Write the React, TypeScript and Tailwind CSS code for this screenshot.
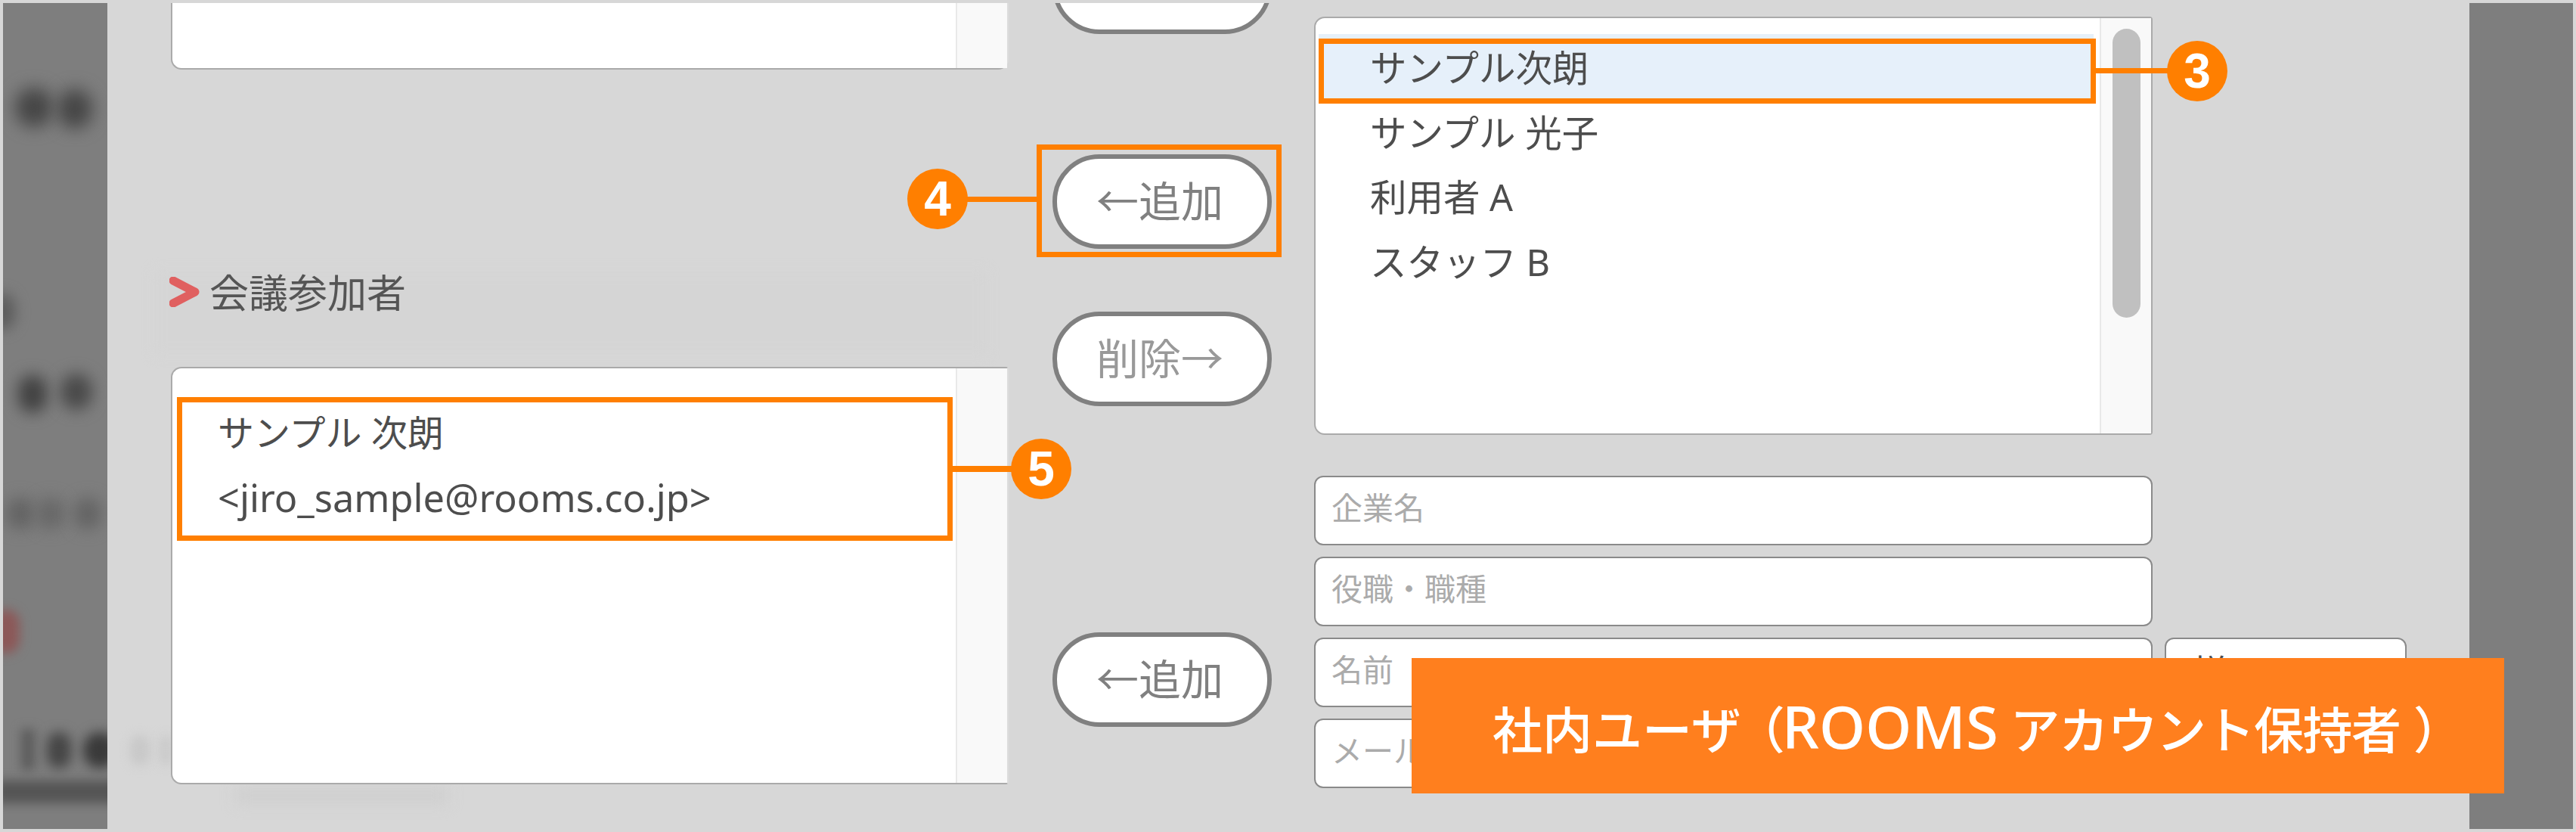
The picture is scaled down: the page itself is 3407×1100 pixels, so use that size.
import React from "react";

const users = ["サンプル 光子", "利用者 A", "スタッフ B"];

function ScrollTrack({ thumb = false }: { thumb?: boolean }) {
  return (
    <div className="w-[68px] shrink-0 self-stretch border-l-2 border-[#e9e9e9] bg-[#f9f9f9] flex justify-center">
      {thumb && <div className="mt-[14px] h-[382px] w-[37px] rounded-full bg-[#c0c0c0]" />}
    </div>
  );
}

function PillButton({ label, className }: { label: string; className: string }) {
  return (
    <button
      className={`h-[125px] w-[290px] shrink-0 rounded-[62px] border-[6px] border-[#808080] bg-white text-[56px] leading-none pr-[6px] pb-[4px] ${className}`}
    >
      {label}
    </button>
  );
}

function Field({ label }: { label: string }) {
  return (
    <div className="flex h-[92px] w-[1109px] shrink-0 items-center rounded-[12px] border-2 border-[#8a8a8a] bg-white pl-[21px] pb-[7px] text-[41px] text-[#ababab]">
      {label}
    </div>
  );
}

function Marker({ n, className }: { n: number; className: string }) {
  return (
    <div
      className={`absolute flex h-[80px] w-[80px] items-center justify-center rounded-full bg-[#ff7f00] font-['Liberation_Sans',sans-serif] text-[64px] font-bold leading-none text-white ${className}`}
    >
      {n}
    </div>
  );
}

export default function App() {
  return (
    <div className="relative flex h-[1100px] w-[3407px] overflow-hidden bg-[#d7d7d7] p-[4px] font-['Noto_Sans','Noto_Sans_CJK_JP',sans-serif] text-[#4d4d4d]">
      {/* blurred page behind the modal, left */}
      <aside className="relative w-[138px] shrink-0 overflow-hidden bg-[#7e7e7e]">
        <div className="absolute left-[16px] top-[112px] h-[52px] w-[50px] rounded-full bg-[#464646] blur-[11px]" />
        <div className="absolute left-[72px] top-[114px] h-[52px] w-[46px] rounded-full bg-[#464646] blur-[11px]" />
        <div className="absolute left-[-20px] top-[384px] h-[48px] w-[36px] rounded-full bg-[#5c5c5c] blur-[9px]" />
        <div className="absolute left-[20px] top-[492px] h-[50px] w-[38px] rounded-full bg-[#424242] blur-[10px]" />
        <div className="absolute left-[76px] top-[490px] h-[48px] w-[42px] rounded-full bg-[#4a4a4a] blur-[10px]" />
        <div className="absolute left-[4px] top-[654px] h-[42px] w-[38px] rounded-full bg-[#646464] blur-[10px]" />
        <div className="absolute left-[44px] top-[654px] h-[42px] w-[38px] rounded-full bg-[#686868] blur-[10px]" />
        <div className="absolute left-[94px] top-[654px] h-[42px] w-[36px] rounded-full bg-[#646464] blur-[10px]" />
        <div className="absolute left-[-14px] top-[802px] h-[58px] w-[36px] rounded-full bg-[#8c5858] blur-[7px]" />
        <div className="absolute left-[24px] top-[960px] h-[54px] w-[18px] bg-[#5c5c5c] blur-[7px]" />
        <div className="absolute left-[58px] top-[964px] h-[48px] w-[32px] rounded-full bg-[#464646] blur-[8px]" />
        <div className="absolute left-[106px] top-[964px] h-[48px] w-[44px] rounded-full bg-[#3a3a3a] blur-[8px]" />
        <div className="absolute left-[-10px] top-[1028px] h-[30px] w-[170px] bg-[#555555] blur-[7px]" />
      </aside>

      <main className="relative flex w-[3124px] shrink-0 overflow-hidden pl-[84px]">
        <div className="absolute left-[30px] top-[968px] h-[40px] w-[26px] rounded-full bg-[#c8c8c8] blur-[7px]" />
        <div className="absolute left-[70px] top-[968px] h-[40px] w-[14px] rounded-full bg-[#c8c8c8] blur-[7px]" />
        <div className="absolute left-[170px] top-[1036px] h-[24px] w-[280px] bg-[#d0d0d0] blur-[9px]" />
        <div className="absolute left-[62px] top-[355px] h-[110px] w-[1100px] bg-[#d5d5d5] blur-[8px]" />

        {/* selected attendees */}
        <div className="relative flex w-[1108px] shrink-0 flex-col">
          <div className="flex h-[88px] rounded-b-[14px] border-x-2 border-b-2 border-[#aaaaaa] border-r-[#dddddd] bg-white">
            <div className="flex-1" />
            <ScrollTrack />
          </div>
          <div className="mt-[265px] flex h-[60px] items-center">
            <svg className="mr-[13px] h-[40px] w-[40px] shrink-0 -ml-[2px] -mt-[2px]" viewBox="0 0 40 40">
              <polyline
                points="5,5 34,20 5,35"
                fill="none"
                stroke="#e06060"
                strokeWidth="11"
                strokeLinejoin="round"
                strokeLinecap="round"
              />
            </svg>
            <span className="text-[52px] leading-none text-[#555555]">会議参加者</span>
          </div>
          <div className="mt-[68px] flex h-[552px] rounded-[14px] rounded-r-[4px] border-2 border-[#aaaaaa] border-r-[#dddddd] bg-white">
            <div className="flex-1 pl-[60px] pt-[42px] text-[48px]">
              <div className="h-[86px] leading-[86px]">サンプル 次朗</div>
              <div className="h-[86px] text-[50.5px] leading-[86px]">&lt;jiro_sample@rooms.co.jp&gt;</div>
            </div>
            <ScrollTrack />
          </div>
        </div>

        {/* add / remove buttons */}
        <div className="ml-[58px] flex w-[290px] shrink-0 flex-col text-[#808080]">
          <PillButton label="←追加" className="mt-[-84px] !pb-[14px]" />
          <PillButton label="←追加" className="mt-[159px]" />
          <PillButton label="削除→" className="mt-[83px] text-[#999999]" />
          <PillButton label="←追加" className="mt-[299px]" />
        </div>

        {/* user list and manual entry */}
        <div className="ml-[56px] flex w-[1442px] shrink-0 flex-col pt-[18px]">
          <div className="flex h-[553px] w-[1109px] rounded-l-[14px] rounded-r-[4px] border-2 border-[#aaaaaa] bg-white">
            <div className="flex-1 pl-[4px] pr-[8px] pt-[21px] text-[48.5px]">
              <div className="flex h-[88.5px] items-center bg-[#e6f0fa] pl-[68px]">サンプル次朗</div>
              {users.map((u) => (
                <div key={u} className="flex h-[85.5px] items-center pl-[68px] pb-[2px]">
                  {u}
                </div>
              ))}
            </div>
            <ScrollTrack thumb />
          </div>
          <div className="mt-[54px] flex flex-col gap-[15px]">
            <Field label="企業名" />
            <Field label="役職・職種" />
            <div className="flex gap-[16px]">
              <Field label="名前" />
              <div className="flex h-[92px] w-[320px] shrink-0 items-center rounded-[12px] border-2 border-[#8a8a8a] bg-white pl-[34px] text-[48px]">
                様
              </div>
            </div>
            <Field label="メールアドレス" />
          </div>
        </div>
      </main>

      <aside className="w-[137px] shrink-0 bg-[#7e7e7e]" />

      {/* annotations */}
      <div className="absolute left-[234px] top-[525px] h-[190px] w-[1026px] border-[7px] border-[#ff7f00]" />
      <div className="absolute left-[1260px] top-[616px] h-[8px] w-[80px] bg-[#ff7f00]" />
      <Marker n={5} className="left-[1337px] top-[580px]" />

      <div className="absolute left-[1371px] top-[191px] h-[149px] w-[324px] border-[7px] border-[#ff7f00]" />
      <div className="absolute left-[1275px] top-[260px] h-[7px] w-[96px] bg-[#ff7f00]" />
      <Marker n={4} className="left-[1200px] top-[223px]" />

      <div className="absolute left-[1744px] top-[51px] h-[86px] w-[1028px] border-[7px] border-[#ff7f00]" />
      <div className="absolute left-[2772px] top-[90px] h-[7px] w-[96px] bg-[#ff7f00]" />
      <Marker n={3} className="left-[2866px] top-[54px]" />

      <div className="absolute left-[1867px] top-[870px] flex h-[179px] w-[1445px] items-center bg-[#ff7f1e] pl-[107px] font-medium leading-none text-white">
        <span className="whitespace-pre text-[66px]">
          社内ユーザ<span className="relative -left-[8px] -mr-[12px] inline-block">（</span>
          <span className="text-[78px]">ROOMS</span>
          <span className="tracking-[-1.5px]"> アカウント保持者</span> ）
        </span>
      </div>
    </div>
  );
}
